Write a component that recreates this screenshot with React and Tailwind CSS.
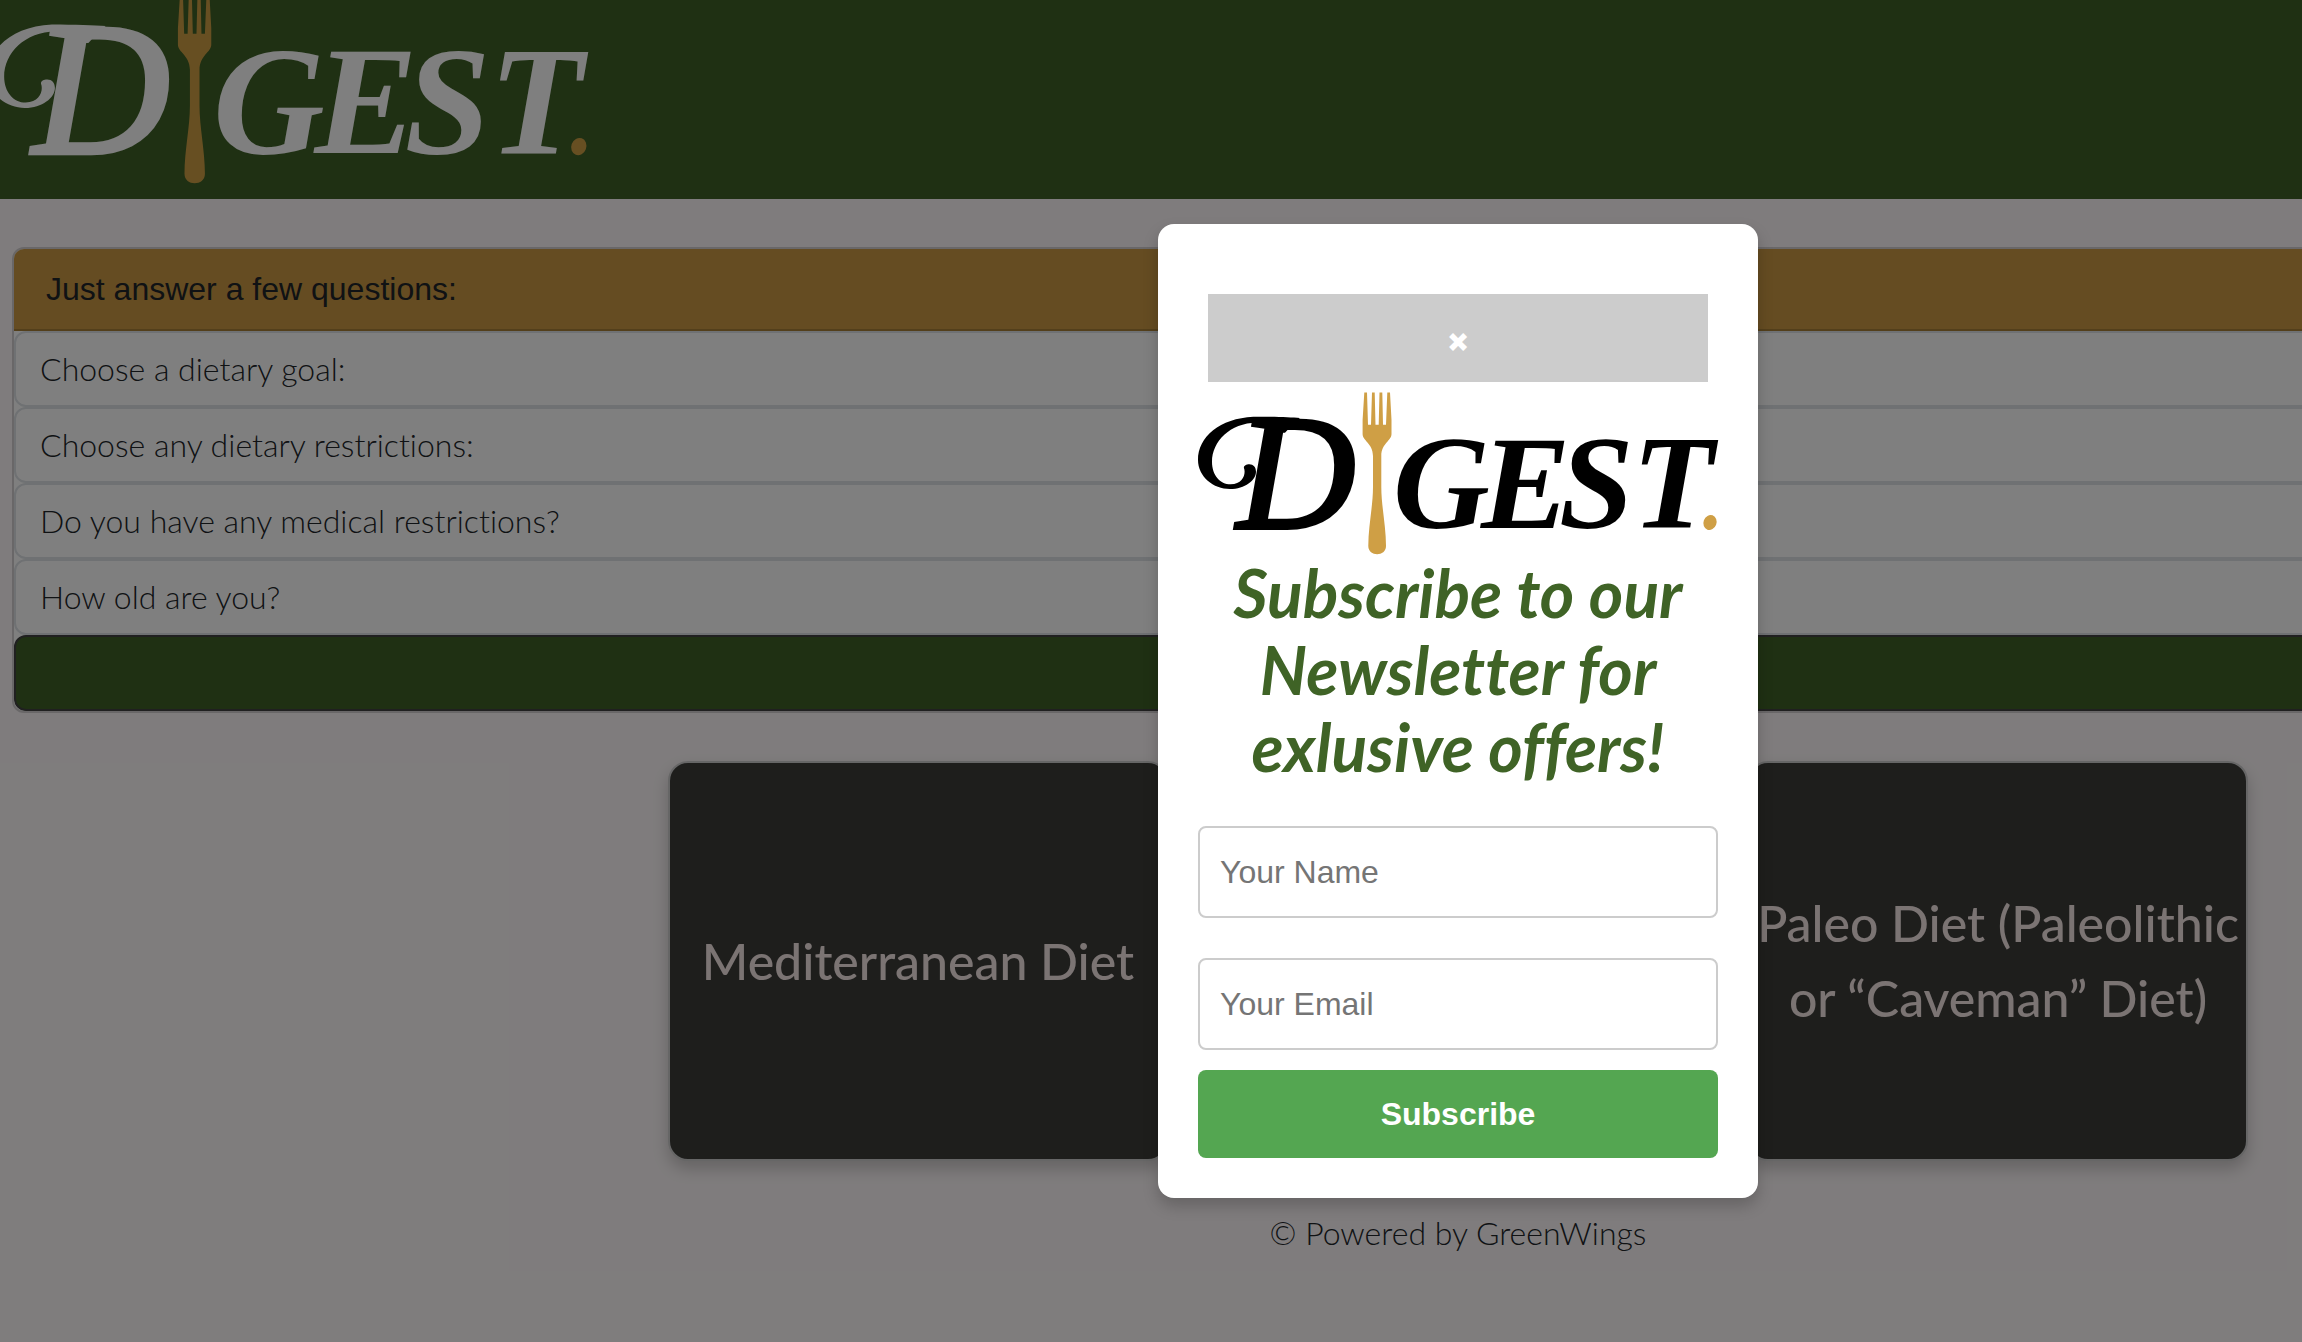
import React from "react";

function Logo({ className }) {
  return (
    <svg viewBox="0 0 520 162" className={className} role="img" aria-label="Digest">
      <g fill="currentColor" stroke="currentColor" fontFamily="Liberation Serif, serif" fontStyle="italic">
        <path
          strokeWidth="0"
          transform="scale(0.33333) translate(-24 -36)"
          d="M330 114 C300 112 250 110 190 110 C90 115 24 170 24 240 C24 290 70 327 120 327 C165 327 198 300 198 275 C198 262 190 253 178 253 C168 253 160 258 162 265 C168 280 160 313 122 313 C90 313 66 285 66 245 C66 185 120 128 200 128 C228 128 246 140 248 158 L285 158 L315 126 Z"
        />
        <text x="39" y="136" fontSize="164" strokeWidth="4">
          D
        </text>
        <text x="195 283 361 434" y="136" fontSize="134" fontWeight="700" strokeWidth="0">
          GEST
        </text>
      </g>
      <g fill="#cf9f45">
        <path d="M166.3 0.5 H169 L170 32.7 H173 L174 0.5 H176.7 L177.5 32.7 H180.7 L181.5 0.5 H184.3 L185 32.7 H188 L189.3 0.5 H192 L193.5 28 V42 C193.5 49 183.5 51 183.3 64 V95 C183.3 114 188 134 188 154 C188 165 170.3 165 170.3 154 C170.3 134 175 114 175 95 V64 C174.8 51 164.6 49 164.6 42 V28 Z" />
        <ellipse cx="512" cy="130.5" rx="6.5" ry="7.6" transform="rotate(20 512 130.5)" />
      </g>
    </svg>
  );
}

const questions = [
  "Choose a dietary goal:",
  "Choose any dietary restrictions:",
  "Do you have any medical restrictions?",
  "How old are you?",
];

const diets = ["Mediterranean Diet", "", "Paleo Diet (Paleolithic or “Caveman” Diet)"];

function Questions() {
  return (
    <section className="mx-3 mt-12 overflow-hidden rounded-xl border-2 border-[#d2cfd0] bg-white">
      <h2 className="border-b-2 border-[#a67e37] bg-[#cb9945] px-8 py-4 font-['Liberation_Sans',sans-serif] text-[32px] leading-12 text-[#212529]">
        Just answer a few questions:
      </h2>
      <div className="flex flex-col">
        {questions.map((q) => (
          <button
            key={q}
            type="button"
            className="rounded-xl border-2 border-[#dee2e6] bg-white px-6 py-3 text-left text-[32px] leading-12 font-light text-[#212529]"
          >
            {q}
          </button>
        ))}
        <button
          type="button"
          aria-label="Submit answers"
          className="h-19 rounded-xl border-2 border-[#404040] bg-[#3e6027]"
        />
      </div>
    </section>
  );
}

function Field({ type, label }) {
  return (
    <input
      type={type}
      aria-label={label}
      placeholder={label}
      className="block h-23 w-full rounded-lg border-2 border-[#cccccc] bg-white px-5 font-['Liberation_Sans',sans-serif] text-[32px] text-black placeholder:text-[#757575]"
    />
  );
}

function SubscribeModal() {
  return (
    <div
      role="dialog"
      aria-modal="true"
      aria-labelledby="subscribe-title"
      className="flex w-[600px] flex-col rounded-2xl bg-white p-10 shadow-[0_8px_16px_rgba(0,0,0,0.2)]"
    >
      <button
        type="button"
        aria-label="Close"
        className="mx-2.5 mt-[30px] h-22 bg-[#cccccc] pt-1 font-['Inter',sans-serif] text-[32px] font-black text-white"
      >
        ×
      </button>
      <Logo className="mt-2.5 block w-full overflow-visible text-black" />
      <h1
        id="subscribe-title"
        className="text-center text-[66px] leading-[77px] font-bold text-[#3f6326] italic"
      >
        Subscribe to our Newsletter for exlusive offers!
      </h1>
      <form className="mt-[41px] flex flex-col" onSubmit={(e) => e.preventDefault()}>
        <div className="flex flex-col gap-10">
          <Field type="text" label="Your Name" />
          <Field type="email" label="Your Email" />
        </div>
        <button
          type="submit"
          className="mt-5 h-22 rounded-lg bg-[#54a651] font-['Liberation_Sans',sans-serif] text-[32px] font-bold text-white"
        >
          Subscribe
        </button>
      </form>
    </div>
  );
}

export default function App() {
  return (
    <div className="w-full overflow-hidden bg-[#fef9fa] font-['Lato',sans-serif] [font-variant-ligatures:none]">
      <div className="relative min-h-screen w-[calc(100%+614px)]">
        <header className="h-[199px] bg-[#3e6027]">
          <Logo className="relative -top-1 -left-3 block w-[600px] overflow-visible text-white" />
        </header>
        <main>
          <Questions />
          <div className="mt-12 flex justify-center gap-10">
            {diets.map((diet) => (
              <article
                key={diet}
                className="flex h-[400px] w-[500px] items-center justify-center rounded-[20px] border-2 border-[#cccccc] bg-[#3c3c39] text-center text-[50px] leading-[75px] font-medium text-[#f6e9e7] shadow-[0_8px_16px_rgba(0,0,0,0.2)]"
              >
                {diet}
              </article>
            ))}
          </div>
        </main>
        <footer className="mt-12 text-center text-[32px] leading-12 font-light text-[#212529]">
          © Powered by GreenWings
        </footer>
        <div className="absolute inset-0 flex items-start justify-center bg-black/50 pt-56">
          <SubscribeModal />
        </div>
      </div>
    </div>
  );
}
